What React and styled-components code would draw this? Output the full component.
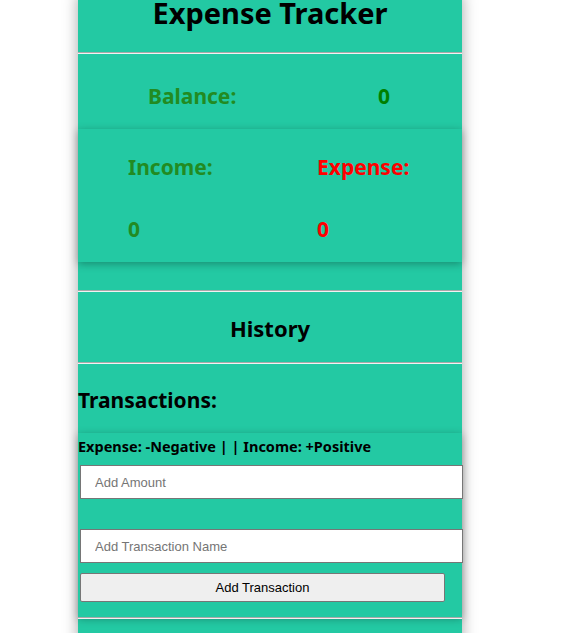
import React from "react";
import { styled, createGlobalStyle } from "styled-components";

const GlobalStyle = createGlobalStyle`
  body {
    margin: 0;
    background: #ffffff;
    font-family: "Noto Sans", "Open Sans", sans-serif;
  }
`;

export default function App() {
  return (
    <>
      <GlobalStyle />
      <Tracker>
        <Title>Expense Tracker</Title>
        <Divider />
        <BalanceRow>
          <Label color="#228b22">Balance:</Label>
          <Label color="#008000">0</Label>
        </BalanceRow>
        <SummaryCard>
          <SummaryCol>
            <Label color="#228b22">Income:</Label>
            <Label color="#228b22">0</Label>
          </SummaryCol>
          <SummaryCol>
            <Label color="#ff0000">Expense:</Label>
            <Label color="#ff0000">0</Label>
          </SummaryCol>
        </SummaryCard>
        <Spacer />
        <Divider />
        <SectionTitle>History</SectionTitle>
        <Divider />
        <Transactions>Transactions:</Transactions>
        <FormCard>
          <Hint>Expense: -Negative | | Income: +Positive</Hint>
          <Field type="text" placeholder="Add Amount" />
          <Field type="text" placeholder="Add Transaction Name" $gap />
          <SubmitButton type="button">Add Transaction</SubmitButton>
        </FormCard>
        <Divider />
        <Spacer />
      </Tracker>
    </>
  );
}

const Tracker = styled.div`
  width: 384px;
  margin-left: 78px;
  background: #23c9a3;
  box-shadow: 0 0 14px rgba(0, 0, 0, 0.35);
  min-height: 633px;
`;

const Title = styled.h1`
  margin: -6px 0 0;
  height: 58px;
  text-align: center;
  font-size: 29px;
  font-weight: 700;
  line-height: 38px;
  color: #000;
`;

const Divider = styled.hr`
  margin: 0;
  border: 0;
  border-top: 1px solid #a9a9a9;
  border-bottom: 1px solid #f2f2f2;
`;

const BalanceRow = styled.div`
  box-sizing: border-box;
  height: 75px;
  display: flex;
  align-items: flex-start;
  justify-content: space-between;
  padding: 28px 72px 0 70px;
`;

const Label = styled.div`
  font-size: 21px;
  font-weight: 700;
  line-height: 28px;
  color: ${(p) => p.color};
`;

const SummaryCard = styled.div`
  height: 133px;
  display: grid;
  grid-template-columns: 1fr 1fr;
  box-shadow: 0 2px 8px rgba(0, 0, 0, 0.3);
`;

const SummaryCol = styled.div`
  display: flex;
  flex-direction: column;
  gap: 34px;
  padding: 24px 0 0 50px;
  &:last-child {
    padding-left: 47px;
  }
`;

const Spacer = styled.div`
  height: 28px;
`;

const SectionTitle = styled.h2`
  margin: 0;
  height: 70px;
  line-height: 72px;
  text-align: center;
  font-size: 22px;
  font-weight: 700;
  color: #000;
`;

const Transactions = styled.h2`
  margin: 0;
  height: 69px;
  line-height: 72px;
  font-size: 21px;
  font-weight: 700;
  color: #000;
`;

const FormCard = styled.div`
  display: flex;
  flex-direction: column;
  padding: 3px 0 15px 2px;
  box-shadow: 0 2px 8px rgba(0, 0, 0, 0.3);
`;

const Hint = styled.div`
  margin-left: -2px;
  font-size: 14.5px;
  font-weight: 700;
  color: #000;
  line-height: 20px;
  margin-bottom: 9px;
`;

const Field = styled.input`
  box-sizing: border-box;
  width: 383px;
  height: 34px;
  margin-top: ${(p) => (p.$gap ? "30px" : "0")};
  padding: 0 14px;
  border: 1px solid #767676;
  background: #fff;
  font-family: "Liberation Sans", Arial, sans-serif;
  font-size: 13px;
  &::placeholder {
    color: #757575;
  }
`;

const SubmitButton = styled.button`
  box-sizing: border-box;
  width: 365px;
  height: 29px;
  margin-top: 10px;
  border: 1px solid #767676;
  border-radius: 2px;
  background: #efefef;
  font-family: "Liberation Sans", Arial, sans-serif;
  font-size: 13px;
  color: #000;
`;
